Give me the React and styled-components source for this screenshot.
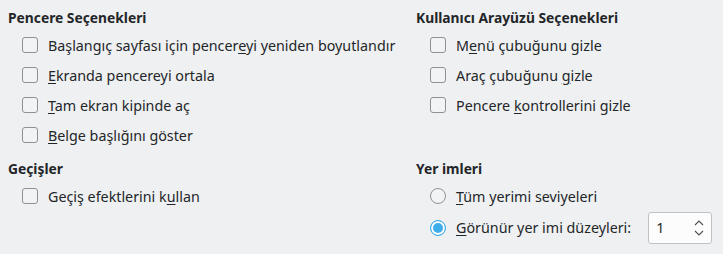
import React from "react";
import styled, { createGlobalStyle } from "styled-components";

const Global = createGlobalStyle`
  html, body { margin: 0; padding: 0; background: #eff0f1; }
  body {
    font-family: "Noto Sans", "DejaVu Sans", sans-serif;
    font-size: 14.3px;
    color: #232629;
  }
`;

const Page = styled.div`
  display: grid;
  grid-template-columns: 408px 1fr;
  padding: 9px 0 0 8px;
  row-gap: 10px;
`;

const Section = styled.section`
  display: flex;
  flex-direction: column;
`;

const Heading = styled.h3`
  margin: 0 0 3px 0;
  font-size: 13.8px;
  font-weight: 700;
  line-height: 18px;
`;

const Row = styled.label`
  display: flex;
  align-items: center;
  height: ${(p) => p.$h || 30}px;
  padding-left: 14px;
  gap: 10px;
  white-space: nowrap;
`;

const Box = styled.span`
  width: 16px;
  height: 16px;
  box-sizing: border-box;
  border: 1px solid #8f9193;
  border-radius: 3px;
  background: #f2f3f4;
  flex: none;
`;

const Radio = styled.span`
  width: 16px;
  height: 16px;
  box-sizing: border-box;
  border-radius: 50%;
  flex: none;
  border: 1px solid ${(p) => (p.$on ? "#3daee9" : "#8f9193")};
  background: ${(p) => (p.$on ? "#3daee9" : "#f2f3f4")};
  box-shadow: ${(p) => (p.$on ? "inset 0 0 0 2px #ffffff" : "none")};
`;

const U = styled.span`
  text-decoration: underline;
  text-underline-offset: 2px;
`;

const Spin = styled.div`
  margin-left: 7px;
  width: 64px;
  height: 32px;
  box-sizing: border-box;
  background: #fcfcfc;
  border: 1px solid #bfc1c3;
  border-radius: 3px;
  display: flex;
  align-items: center;
  justify-content: space-between;
  padding: 0 6px 0 7px;
`;

const Arrows = styled.svg`
  width: 12px;
  height: 20px;
  display: block;
`;

function Check({ children }) {
  return (
    <Row>
      <Box />
      <span>{children}</span>
    </Row>
  );
}

export default function App() {
  return (
    <>
      <Global />
      <Page>
        <Section>
          <Heading>Pencere Seçenekleri</Heading>
          <Check>
            Başlangıç sayfası için pencer<U>e</U>yi yeniden boyutlandır
          </Check>
          <Check>
            <U>E</U>kranda pencereyi ortala
          </Check>
          <Check>
            <U>T</U>am ekran kipinde aç
          </Check>
          <Check>
            <U>B</U>elge başlığını göster
          </Check>
        </Section>
        <Section>
          <Heading>Kullanıcı Arayüzü Seçenekleri</Heading>
          <Check>
            M<U>e</U>nü çubuğunu gizle
          </Check>
          <Check>
            Araç çubuğunu <U>g</U>izle
          </Check>
          <Check>
            Pencere <U>k</U>ontrollerini gizle
          </Check>
        </Section>
        <Section>
          <Heading>Geçişler</Heading>
          <Check>
            Geçiş efektlerini k<U>u</U>llan
          </Check>
        </Section>
        <Section>
          <Heading>Yer imleri</Heading>
          <Row>
            <Radio />
            <span>
              <U>T</U>üm yerimi seviyeleri
            </span>
          </Row>
          <Row $h={33}>
            <Radio $on />
            <span>
              <U>G</U>örünür yer imi düzeyleri:
            </span>
            <Spin>
              <span>1</span>
              <Arrows viewBox="0 0 12 20">
                <path d="M2 7 L6 3 L10 7" fill="none" stroke="#4d4f51" strokeWidth="1.1" />
                <path d="M2 13 L6 17 L10 13" fill="none" stroke="#4d4f51" strokeWidth="1.1" />
              </Arrows>
            </Spin>
          </Row>
        </Section>
      </Page>
    </>
  );
}
